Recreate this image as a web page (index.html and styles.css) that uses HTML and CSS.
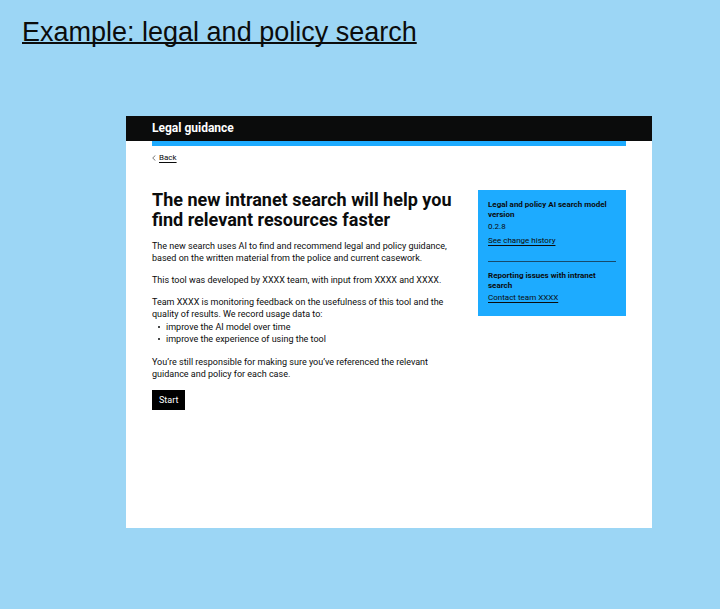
FILE: index.html
```html
<!DOCTYPE html>
<html lang="en">
<head>
<meta charset="utf-8">
<meta name="viewport" content="width=device-width, initial-scale=1">
<title>Example: legal and policy search</title>
<link rel="stylesheet" href="styles.css">
</head>
<body>
<h1 class="slide-title">Example: legal and policy search</h1>
<div class="screen">
  <header class="bar">Legal guidance</header>
  <div class="content">
    <div class="accent"></div>
    <nav class="back">
      <svg class="chevron" viewBox="0 0 4 6" aria-hidden="true"><path d="M3.4 .4 .7 3l2.7 2.6" fill="none" stroke="#555" stroke-width=".8"/></svg>
      <a href="#">Back</a>
    </nav>
    <div class="columns">
      <main class="main">
        <h2>The new intranet search will help you<br>find relevant resources faster</h2>
        <p>The new search uses AI to find and recommend legal and policy guidance,<br>based on the written material from the police and current casework.</p>
        <p>This tool was developed by XXXX team, with input from XXXX and XXXX.</p>
        <p>Team XXXX is monitoring feedback on the usefulness of this tool and the<br>quality of results. We record usage data to:</p>
        <ul>
          <li>improve the AI model over time</li>
          <li>improve the experience of using the tool</li>
        </ul>
        <p>You’re still responsible for making sure you’ve referenced the relevant<br>guidance and policy for each case.</p>
        <button type="button" class="start">Start</button>
      </main>
      <aside class="panel">
        <section>
          <h3>Legal and policy AI search model<br>version</h3>
          <p class="version">0.2.8</p>
          <a href="#">See change history</a>
        </section>
        <section class="issues">
          <h3>Reporting issues with intranet<br>search</h3>
          <a href="#">Contact team XXXX</a>
        </section>
      </aside>
    </div>
  </div>
</div>
</body>
</html>
```
FILE: styles.css
```css
* {
  box-sizing: border-box;
}

body {
  margin: 0;
  padding: 14px 68px 80px 22px;
  background: #9cd6f5;
  color: #0b0c0c;
  font-family: Roboto, "Liberation Sans", sans-serif;
  font-size: 9px;
  line-height: 12px;
}

h1, h2, h3, p, ul {
  margin: 0;
}

a {
  color: inherit;
  text-decoration: underline;
  text-underline-offset: 2px;
  text-decoration-skip-ink: none;
}

.slide-title {
  margin-bottom: 66px;
  font-family: "Liberation Sans", sans-serif;
  font-size: 27px;
  font-weight: 400;
  line-height: 36px;
  text-decoration: underline;
  text-decoration-thickness: 2px;
  text-underline-offset: 1px;
  text-decoration-skip-ink: none;
}

.screen {
  min-height: 412px;
  margin-left: 104px;
  background: #fff;
}

.bar {
  padding: 0 26px;
  background: #0b0c0c;
  color: #fff;
  font-size: 12px;
  font-weight: 700;
  line-height: 25px;
}

.content {
  padding: 0 26px;
}

.accent {
  height: 5px;
  background: #1dabff;
}

.back {
  display: flex;
  align-items: center;
  gap: 3px;
  margin-top: 6px;
  font-size: 8px;
}

.chevron {
  width: 4px;
  height: 6px;
}

.columns {
  display: grid;
  grid-template-columns: 1fr 148px;
  gap: 24px;
  align-items: start;
  margin-top: 26px;
}

.main h2 {
  margin-bottom: 10px;
  font-size: 18px;
  line-height: 20px;
}

.main p {
  margin-bottom: 10px;
}

.main p:has(+ ul) {
  margin-bottom: 1px;
}

.main ul {
  margin-bottom: 11px;
  padding: 0;
  list-style: none;
}

.main li {
  display: flex;
  align-items: center;
  gap: 6px;
  padding-left: 6px;
}

.main li::before {
  content: "";
  width: 2px;
  height: 2px;
  border-radius: 50%;
  background: #0b0c0c;
}

.start {
  height: 20px;
  padding: 0 7px;
  border: 0;
  background: #000;
  color: #fff;
  font: inherit;
}

.panel {
  padding: 10px 10px 12px;
  background: #1dabff;
  font-size: 8px;
}

.panel h3 {
  margin-bottom: 1px;
  font-size: 8px;
  line-height: 10px;
}

.version {
  margin-bottom: 2px;
}

.issues {
  margin-top: 14px;
  padding-top: 9px;
  border-top: 1px solid #164a6b;
}
```
